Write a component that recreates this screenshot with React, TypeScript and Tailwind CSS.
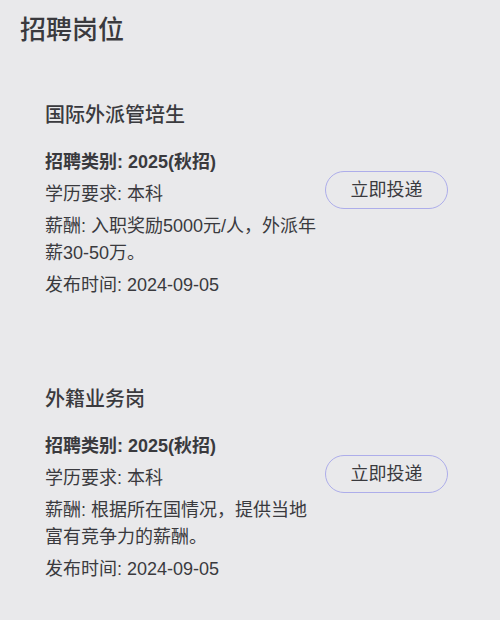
import React from "react";

const jobs = [
  {
    title: "国际外派管培生",
    salary: "薪酬: 入职奖励5000元/人，外派年薪30-50万。",
  },
  {
    title: "外籍业务岗",
    salary: "薪酬: 根据所在国情况，提供当地富有竞争力的薪酬。",
  },
];

export default function App() {
  return (
    <div
      className="w-[500px] h-[620px] overflow-hidden bg-[#e9e9eb] text-[#3a3a3e]"
      style={{ fontFamily: '"Liberation Sans", "Noto Sans CJK SC", sans-serif' }}
    >
      <h1 className="pl-[20px] pt-[12px] text-[26px] leading-[36px] font-medium">招聘岗位</h1>
      <div className="pl-[45px] pt-[53px] flex flex-col gap-[86px]">
        {jobs.map((j) => (
          <div key={j.title} className="flex flex-col">
            <h2 className="text-[20px] leading-[28px] font-medium">{j.title}</h2>
            <div className="flex items-start mt-[20px]">
              <div className="w-[272px] flex flex-col gap-[5px] text-[18px] leading-[27px]">
                <p className="font-bold">招聘类别: 2025(秋招)</p>
                <p>学历要求: 本科</p>
                <p>{j.salary}</p>
                <p>发布时间: 2024-09-05</p>
              </div>
              <button className="ml-[8px] mt-[22px] w-[123px] h-[38px] shrink-0 rounded-full border-[1.5px] border-[#adadea] text-[18px] text-[#3a3a3e] flex items-center justify-center">
                立即投递
              </button>
            </div>
          </div>
        ))}
      </div>
    </div>
  );
}
